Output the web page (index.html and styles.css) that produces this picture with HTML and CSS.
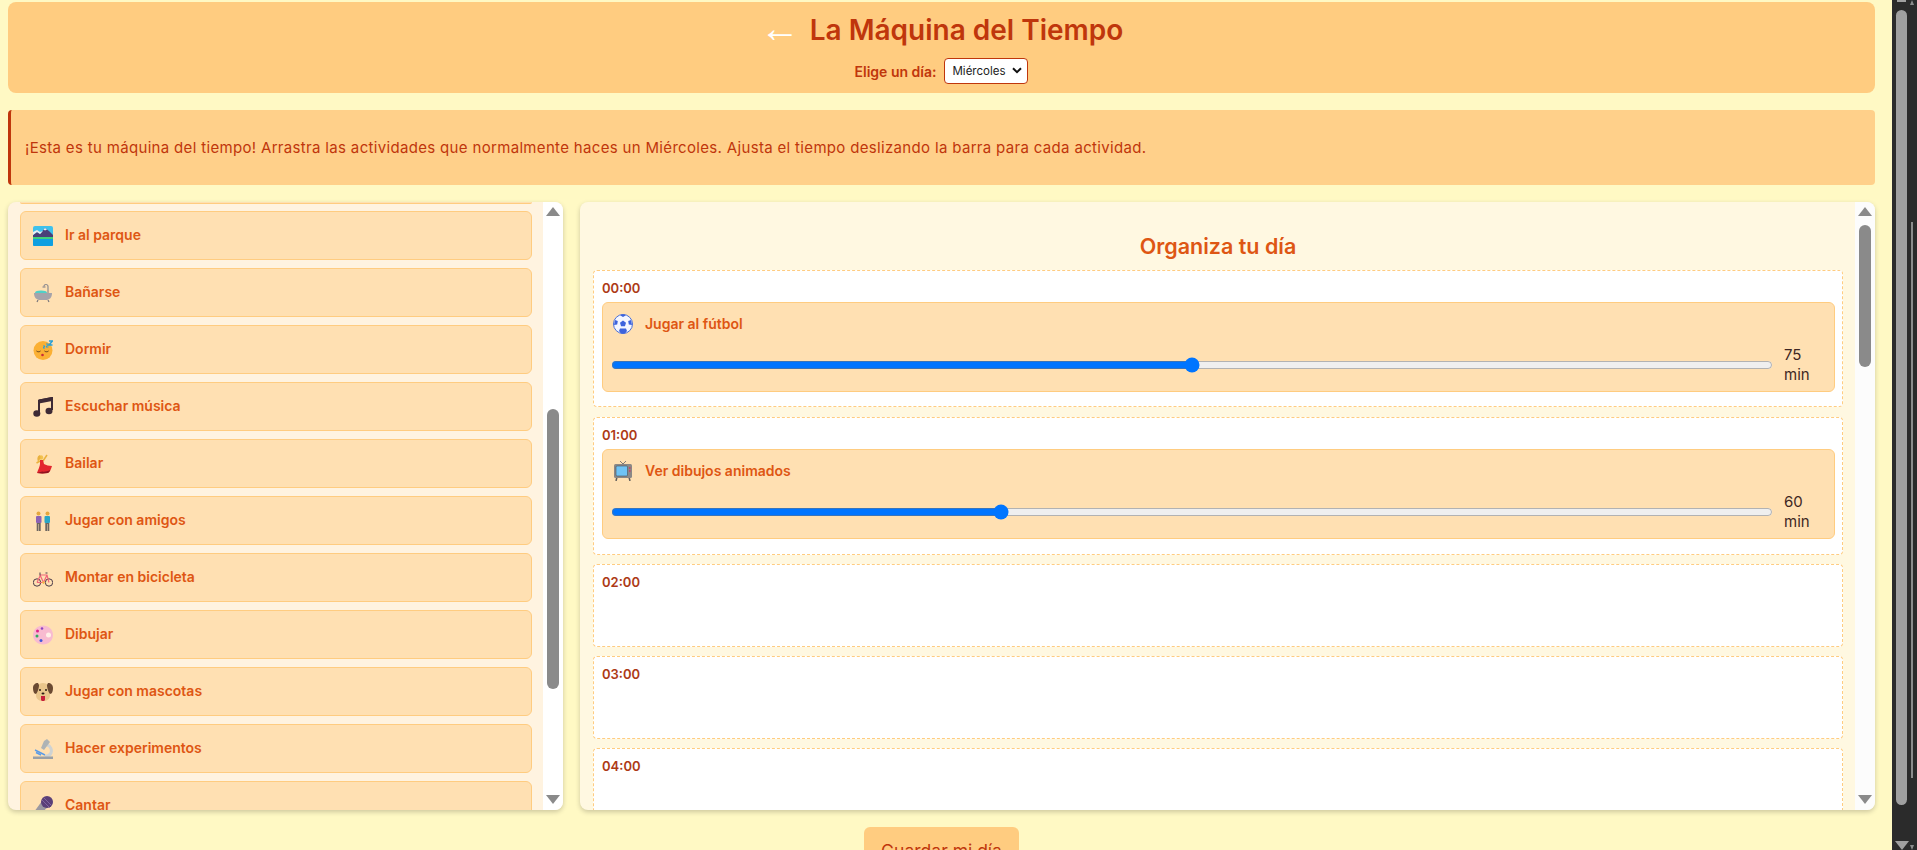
FILE: index.html
```html
<!DOCTYPE html>
<html lang="es">
<head>
<meta charset="utf-8">
<title>La Máquina del Tiempo</title>
<link rel="stylesheet" href="styles.css">
</head>
<body>
<div class="window">
  <main class="page">
    <header class="top">
      <div class="title-row">
        <a class="back">←</a>
        <h1>La Máquina del Tiempo</h1>
      </div>
      <div class="day-row">
        <label class="day-label" for="day">Elige un día:</label>
        <div class="select-wrap">
          <select id="day" class="day-select"><option>Miércoles</option></select>
          <svg class="chevron" viewBox="0 0 10 7"><path d="M1 1.200l4 4 4-4" fill="none" stroke="#111" stroke-width="2"/></svg>
        </div>
      </div>
    </header>

    <section class="notice">
      <p>¡Esta es tu máquina del tiempo! Arrastra las actividades que normalmente haces un Miércoles. Ajusta el tiempo deslizando la barra para cada actividad.</p>
    </section>

    <div class="board">
      <aside class="panel panel-left">
        <div class="list">
          <div class="item-stub"></div>
          <div class="item"><svg class="ico" viewBox="0 0 20 20"><rect width="20" height="20" rx="2" fill="#3fc1ec"/><rect y="12" width="20" height="8" rx="1" fill="#0f9fe0"/><path d="M0 9l4-3 3 2 5-6 4 3 4 4v4H0z" fill="#4a3f78"/><path d="M0 6l4-2 3 2 3-1-3 3-3-2-4 3zM12 2l2 1.500-2 1-1.500-1z" fill="#e8eef4"/><rect y="11" width="20" height="2" fill="#3fd07a"/></svg><span>Ir al parque</span></div>
          <div class="item"><svg class="ico" viewBox="0 0 20 20"><path d="M15 10V3.500a2 2 0 0 0-4 0" fill="none" stroke="#8d8a8f" stroke-width="1.200"/><path d="M9.500 4h3" stroke="#8d8a8f" stroke-width="1.200"/><ellipse cx="8" cy="9.500" rx="6" ry="2" fill="#4fd0c8"/><path d="M1 10h18c0 5-3 7-6 7H7c-3 0-6-2-6-7z" fill="#a5a3aa"/><path d="M5 17l-1 2M15 17l1 2" stroke="#7a777c" stroke-width="1.200"/></svg><span>Bañarse</span></div>
          <div class="item"><svg class="ico" viewBox="0 0 20 20"><circle cx="10" cy="10.500" r="9.500" fill="#fbb034"/><path d="M3.500 11c1 1 3 1 4 0M11.500 11c1 1 3 1 4 0" fill="none" stroke="#5b3a1a" stroke-width="1"/><circle cx="9.500" cy="15" r="1.300" fill="#c92a3a"/><path d="M10 6h2l-2 2h2M13 4h2.500l-2.500 3h2.500" fill="none" stroke="#2a9fd6" stroke-width="1"/><path d="M16 1h3.500l-3.500 4h3.500" fill="none" stroke="#2a9fd6" stroke-width="1.500"/></svg><span>Dormir</span></div>
          <div class="item"><svg class="ico" viewBox="0 0 20 20"><path d="M6 16V3.500L19 1v12" fill="none" stroke="#3e2a35" stroke-width="2"/><path d="M6 2.500L19 0v4L6 6.500z" fill="#3e2a35"/><ellipse cx="3.800" cy="16.500" rx="3.500" ry="3.200" fill="#3e2a35"/><ellipse cx="16" cy="14" rx="3.500" ry="3.200" fill="#3e2a35"/></svg><span>Escuchar música</span></div>
          <div class="item"><svg class="ico" viewBox="0 0 20 20"><path d="M10 7l4-6" fill="none" stroke="#eab13d" stroke-width="1.500"/><path d="M7 7l-3.500 2" fill="none" stroke="#eab13d" stroke-width="1.500"/><path d="M7 6h3l1 4c2 1 5 2 8 2-1 3-2 6-4 7-4 .5-8 .5-11 0 1-3 3-7 3-9z" fill="#e3262e"/><path d="M4 19c4 .5 7 .5 11 0 1-.7 1.700-1.700 2.300-3-3 1.500-6 2-8 1.500-2 .5-3.500 1-5.300 1.500z" fill="#8f1420"/><circle cx="8" cy="3.500" r="2.200" fill="#f2c14e"/><path d="M6.500 1C4 2.500 4 5.500 5 7.500c1.500-1 2.500-3 2.500-5z" fill="#eab13d"/></svg><span>Bailar</span></div>
          <div class="item"><svg class="ico" viewBox="0 0 20 20"><circle cx="5.500" cy="2.500" r="2" fill="#e5a83f"/><circle cx="14.500" cy="2.500" r="2" fill="#e5a83f"/><rect x="3" y="5" width="5.500" height="7" rx="1" fill="#8c62b4"/><rect x="11.500" y="5" width="5.500" height="7" rx="1" fill="#2aa6c6"/><path d="M3.700 12h4v8H6v-7h-.500v7H3.700zM12.300 12h4v8h-1.800v-7H14v7h-1.700z" fill="#6e6660"/></svg><span>Jugar con amigos</span></div>
          <div class="item"><svg class="ico" viewBox="0 0 20 20"><g fill="none"><circle cx="4" cy="14.500" r="3.700" stroke="#4a3a48"/><circle cx="16" cy="14.500" r="3.700" stroke="#4a3a48"/><path d="M4 14.500L7.500 7h6.500L16 14.500M7 7l3.500 7.500L14 7M4 14.500h6.500" stroke="#f0657a" stroke-width="1.200"/><path d="M7 4.500v3M12.500 5h2" stroke="#4a3a48"/></g><circle cx="10.500" cy="14.500" r="1.200" fill="#f5b942"/></svg><span>Montar en bicicleta</span></div>
          <div class="item"><svg class="ico" viewBox="0 0 20 20"><path d="M10 .500C4.500.500 0 4.500 0 10s4.500 9.500 10 9.500 10-4 10-9.500S15.500.500 10 .500z" fill="#f8bbd0"/><circle cx="15.500" cy="10" r="2.500" fill="#fff0e8"/><circle cx="4.500" cy="6" r="1.500" fill="#e0218a"/><circle cx="9" cy="3.500" r="1.300" fill="#8e44c4"/><circle cx="4" cy="11" r="1.500" fill="#2fae5c"/><circle cx="8" cy="15.500" r="1.500" fill="#4459d8"/></svg><span>Dibujar</span></div>
          <div class="item"><svg class="ico" viewBox="0 0 20 20"><path d="M3 8c0-4 3-7 7-7s7 3 7 7v5c0 4-3 6-7 6s-7-2-7-6z" fill="#eac68c"/><path d="M5 1C2 1 0 3 0 6c0 3 1 6 3 6 2-2 3-7 3-9zM15 1c3 0 5 2 5 5 0 3-1 6-3 6-2-2-3-7-3-9z" fill="#6b4a32"/><circle cx="7" cy="8" r="1" fill="#2a1c14"/><circle cx="13" cy="8" r="1" fill="#2a1c14"/><ellipse cx="10" cy="11.500" rx="1.500" ry="1" fill="#2a1c14"/><path d="M8 14h4v3.500c0 2-4 2-4 0z" fill="#c81e3a"/></svg><span>Jugar con mascotas</span></div>
          <div class="item"><svg class="ico" viewBox="0 0 20 20"><path d="M14 6c4 1 5 5 4 8-1 2-3 3.500-6 3.500" fill="none" stroke="#cfd3d3" stroke-width="3"/><path d="M11 2l3-2 3 3-6 8-3-2z" fill="#aeb3b5"/><path d="M2 11l10 5M3 13.500l5 2.500" fill="none" stroke="#5b9be6" stroke-width="1.400"/><rect y="17.500" width="20" height="2.500" fill="#9aa0a6"/></svg><span>Hacer experimentos</span></div>
          <div class="item"><svg class="ico" viewBox="0 0 20 20"><path d="M9 5l6 6L5 20l-4-4z" fill="#9c98a0"/><circle cx="14" cy="6" r="6" fill="#5b3f78"/><path d="M9 4l8 8M11 2l7 7" stroke="#8a6eaa" stroke-width=".8"/></svg><span>Cantar</span></div>
        </div>
        <div class="bar">
          <i class="arrow arrow-up"></i>
          <div class="track"><div class="thumb thumb-left"></div></div>
          <i class="arrow arrow-down"></i>
        </div>
      </aside>

      <section class="panel panel-right">
        <div class="planner">
          <h2>Organiza tu día</h2>
          <div class="slot">
            <div class="time">00:00</div>
            <div class="card">
              <div class="card-head"><svg class="ico" viewBox="0 0 20 20"><circle cx="10" cy="10" r="9.500" fill="#f4f6ff" stroke="#4a6fd8"/><path d="M10 6.500l3 2.200-1.100 3.600H8.100L7 8.700z" fill="#3d63dc"/><path d="M7.500 1.500L10 3l2.500-1.500-.5-1H8zM2 6l2.800 1-.6 3.500L1 11zM18 6l-2.800 1 .6 3.500L19 11zM6 17l1-2.500h6L14 17l-2 2.500H8z" fill="#3d63dc"/></svg><span>Jugar al fútbol</span></div>
              <div class="range-row"><input class="range" type="range" min="30" max="120" value="75"><span class="mins">75 min</span></div>
            </div>
          </div>
          <div class="slot">
            <div class="time">01:00</div>
            <div class="card">
              <div class="card-head"><svg class="ico" viewBox="0 0 20 20"><path d="M7 0l3 3 3-3" fill="none" stroke="#7e7a78" stroke-width="1"/><path d="M4 16l-1 4M16 16l1 4" stroke="#5f5c5a" stroke-width="1.500"/><rect x="1" y="3" width="18" height="14" rx="1.500" fill="#8b8886"/><rect x="3" y="5" width="11.500" height="10" rx="1" fill="#6fc3f5" stroke="#47505a" stroke-width=".6"/><circle cx="16.800" cy="7" r=".9" fill="#c2456a"/><circle cx="16.800" cy="10" r=".9" fill="#c2456a"/></svg><span>Ver dibujos animados</span></div>
              <div class="range-row"><input class="range" type="range" min="30" max="120" value="60"><span class="mins">60 min</span></div>
            </div>
          </div>
          <div class="slot slot-empty"><div class="time">02:00</div></div>
          <div class="slot slot-empty"><div class="time">03:00</div></div>
          <div class="slot slot-empty"><div class="time">04:00</div></div>
        </div>
        <div class="bar bar-right">
          <i class="arrow arrow-up"></i>
          <div class="track"><div class="thumb thumb-right"></div></div>
          <i class="arrow arrow-down"></i>
        </div>
      </section>
    </div>

    <div class="actions"><button class="save" type="button">Guardar mi día</button></div>
  </main>

  <div class="outer-bar">
    <div class="outer-main">
      <div class="outer-stub"></div>
      <div class="outer-thumb"></div>
      <i class="outer-arrow"></i>
    </div>
    <div class="outer-side">
      <i class="side-up"></i>
      <div class="outer-thin"></div>
      <i class="side-down"></i>
    </div>
  </div>
</div>
</body>
</html>
```

FILE: styles.css
```css
* { box-sizing: border-box; }
html, body { margin: 0; height: 100%; overflow: hidden; }
body { font-family: Inter, "Noto Sans", sans-serif; background: #fff9c4; color: #3e2723; }

.window { display: flex; height: 850px; }
.page { flex: 1; min-width: 0; height: 850px; overflow: hidden; padding: 2px 17px 0 8px; }

.top { height: 91px; background: #ffcc80; border-radius: 8px; display: flex; flex-direction: column; align-items: center; padding-top: 11px; }
.title-row { display: flex; align-items: center; height: 34px; gap: 10px; }
.back { color: #fff; font-family: "Liberation Sans", sans-serif; font-size: 40px; line-height: 34px; position: relative; top: -2px; }
h1 { margin: 0; font-size: 28px; font-weight: 600; line-height: 34px; color: #bf360c; }
.day-row { display: flex; align-items: center; gap: 8px; margin-top: 11px; }
.day-label { font-size: 14px; font-weight: 600; color: #bf360c; }
.select-wrap { position: relative; width: 84px; height: 26px; }
.day-select { appearance: none; width: 100%; height: 100%; font-size: 11.500px; font-family: inherit; background: #fff; border: 1px solid #bf360c; border-radius: 4px; padding: 0 0 0 7px; color: #222; }
.chevron { position: absolute; right: 6px; top: 9px; width: 10px; height: 7px; pointer-events: none; }

.notice { height: 75px; margin-top: 17px; background: #ffd08a; border-left: 3px solid #bf360c; border-radius: 4px; display: flex; align-items: center; padding-left: 14px; }
.notice p { margin: 0; font-size: 15px; letter-spacing: .33px; color: #bf360c; }

.board { display: flex; gap: 17px; margin-top: 17px; height: 608px; }
.panel { display: flex; overflow: hidden; border-radius: 8px; box-shadow: 0 2px 5px rgba(0,0,0,.2); }
.panel-left { width: 555px; background: #fff3e0; }
.panel-right { flex: 1; min-width: 0; background: #fff8e1; }

.list { flex: 1; min-width: 0; overflow: hidden; padding: 0 11px 0 12px; }
.item-stub { height: 2px; margin-bottom: 7px; border-bottom: 1px solid #ffcc80; border-radius: 0 0 8px 8px; background: #ffe0b2; }
.item { height: 49px; margin-bottom: 8px; display: flex; align-items: center; gap: 12px; padding: 0 12px; background: #ffe0b2; border: 1px solid #ffcc80; border-radius: 6px; font-size: 14px; font-weight: 600; color: #de5613; }
.item span { padding-bottom: 3px; }
.card-head span { padding-bottom: 1px; }
.ico { width: 20px; height: 20px; flex: none; }

.bar { width: 20px; flex: none; background: #fff; display: flex; flex-direction: column; align-items: center; padding: 5px 0 6px; }
.bar-right { background: #fcfcfc; }
.arrow { flex: none; width: 0; height: 0; border-left: 7px solid transparent; border-right: 7px solid transparent; }
.arrow-up { border-bottom: 9px solid #8a8a8a; }
.arrow-down { border-top: 9px solid #8a8a8a; }
.track { flex: 1; width: 100%; display: flex; justify-content: center; }
.thumb { width: 12px; background: #8a8a8a; border-radius: 6px; }
.thumb-left { height: 280px; margin-top: 193px; }
.thumb-right { height: 142px; margin-top: 9px; }

.planner { flex: 1; min-width: 0; overflow: hidden; padding: 0 12px 0 13px; }
h2 { margin: 0; padding-top: 31px; height: 67.500px; text-align: center; font-size: 21.500px; font-weight: 600; line-height: 26px; color: #de5613; }
.slot { margin-bottom: 9.500px; padding: 7px 7px 0 8px; height: 137.800px; background: #fff; border: 1px dashed #ffcc80; border-radius: 4px; }
.slot-empty { height: 82.700px; }
.time { font-size: 13px; font-weight: 600; line-height: 20px; color: #ad3a16; }
.card { margin-top: 4.500px; height: 90px; padding: 0 12px 0 8px; background: #ffe0b2; border: 1px solid #ffcc80; border-radius: 6px; }
.card-head { display: flex; align-items: center; gap: 12px; height: 42px; padding-left: 2px; font-size: 14px; font-weight: 600; color: #de5613; }
.range-row { display: flex; align-items: center; gap: 11px; }
.range { flex: 1; min-width: 0; margin: 0; }
.mins { width: 38px; flex: none; font-size: 15px; line-height: 20px; color: #3e2723; }

.actions { display: flex; justify-content: center; margin-top: 17px; }
.save { width: 155px; height: 46px; border: 0; border-radius: 6px; background: #ffcc80; color: #bf360c; font: 400 17.500px Inter, sans-serif; }

.outer-bar { width: 25px; flex: none; height: 850px; background: #2b2b2b; display: flex; padding-left: 4px; }
.outer-main { width: 11px; height: 100%; position: relative; }
.outer-stub { height: 2px; margin: 0 1px; background: #a0a0a0; }
.outer-thumb { width: 11px; height: 795px; margin-top: 8px; background: #a0a0a0; border-radius: 6px; }
.outer-arrow { position: absolute; left: -1px; bottom: 0; width: 0; height: 0; border-left: 7px solid transparent; border-right: 7px solid transparent; border-top: 9px solid #a0a0a0; }
.outer-side { position: relative; width: 2px; height: 100%; margin-left: 4px; }
.outer-thin { width: 2px; height: 556px; margin-top: 222px; background: #8c8c8c; }
.side-up { position: absolute; left: -1px; top: 0; width: 0; height: 0; border-left: 2px solid transparent; border-right: 2px solid transparent; border-bottom: 5px solid #8c8c8c; }
.side-down { position: absolute; left: -1px; bottom: 0; width: 0; height: 0; border-left: 2px solid transparent; border-right: 2px solid transparent; border-top: 5px solid #8c8c8c; }
```
